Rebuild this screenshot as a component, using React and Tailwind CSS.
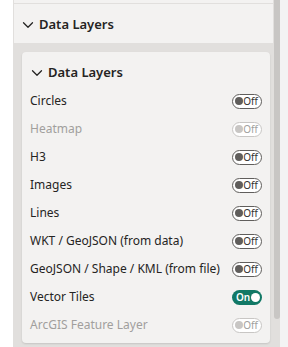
import React from 'react';

const layers = [
  { name: 'Circles', on: false, disabled: false },
  { name: 'Heatmap', on: false, disabled: true },
  { name: 'H3', on: false, disabled: false },
  { name: 'Images', on: false, disabled: false },
  { name: 'Lines', on: false, disabled: false },
  { name: 'WKT / GeoJSON (from data)', on: false, disabled: false },
  { name: 'GeoJSON / Shape / KML (from file)', on: false, disabled: false },
  { name: 'Vector Tiles', on: true, disabled: false },
  { name: 'ArcGIS Feature Layer', on: false, disabled: true },
];

function Chevron() {
  return (
    <svg width="12" height="12" viewBox="0 0 12 12" fill="none" className="shrink-0">
      <path d="M1.5 3.75 6 8.25 10.5 3.75" stroke="#252423" strokeWidth="1.25" strokeLinecap="round" strokeLinejoin="round" />
    </svg>
  );
}

function Toggle({ on, disabled }) {
  if (on) {
    return (
      <div className="w-[30px] h-[15px] rounded-full bg-[#117865] flex items-center justify-between pl-[4px] pr-[2px]">
        <span className="text-[10px] leading-none font-semibold text-white">On</span>
        <span className="w-[9px] h-[9px] rounded-full bg-white" />
      </div>
    );
  }
  return (
    <div
      className={`w-[30px] h-[15px] rounded-full border bg-white flex items-center pl-[2px] pr-[3px] justify-between ${
        disabled ? 'border-[#c8c6c4]' : 'border-[#605e5c]'
      }`}
    >
      <span className={`w-[8px] h-[8px] rounded-full ${disabled ? 'bg-[#c8c6c4]' : 'bg-[#605e5c]'}`} />
      <span className={`text-[10px] leading-none ${disabled ? 'text-[#a19f9d]' : 'text-[#323130]'}`}>Off</span>
    </div>
  );
}

export default function App() {
  return (
    <div className="w-[288px] h-[347px] bg-white flex overflow-hidden" style={{ fontFamily: '"Noto Sans", "Open Sans", sans-serif' }}>
      <div className="w-[13px] shrink-0" />

      {/* panel */}
      <div className="w-[267px] shrink-0 flex border-l border-[#e1dfdd]">
        <div className="flex-1 flex flex-col bg-[#f3f2f1]">
          <div className="h-[4px] shrink-0 border-b border-[#e1dfdd]" />
          <div className="h-[39px] shrink-0 flex items-center gap-[5px] pl-[8px] pt-[3px]">
            <Chevron />
            <span className="text-[13px] font-semibold text-[#252423]">Data Layers</span>
          </div>

          <div className="flex-1 bg-[#e1dfdd] pl-[8px] pr-[2px] pt-[9px]">
            <div className="w-[248px] rounded-[4px] bg-[#f3f2f1] shadow-[0_1px_2px_rgba(0,0,0,0.12)] pt-[7px] pb-[4px] px-[8px]">
              <div className="h-[28px] flex items-center gap-[5px] pl-[1px]">
                <Chevron />
                <span className="text-[13px] font-semibold text-[#252423]">Data Layers</span>
              </div>
              {layers.map(l => (
                <div key={l.name} className="h-[28px] flex items-center justify-between">
                  <span className={`text-[12px] ${l.disabled ? 'text-[#a19f9d]' : 'text-[#252423]'}`}>{l.name}</span>
                  <Toggle on={l.on} disabled={l.disabled} />
                </div>
              ))}
            </div>
          </div>
        </div>

        {/* scrollbar */}
        <div className="w-[7px] shrink-0 border-l border-[#e1dfdd] bg-[#e1dfdd] flex flex-col">
          <div className="h-[319px] bg-[#c8c6c4] rounded-b-full" />
        </div>
      </div>

      <div className="flex-1 bg-[#f3f3f3]" />
    </div>
  );
}
